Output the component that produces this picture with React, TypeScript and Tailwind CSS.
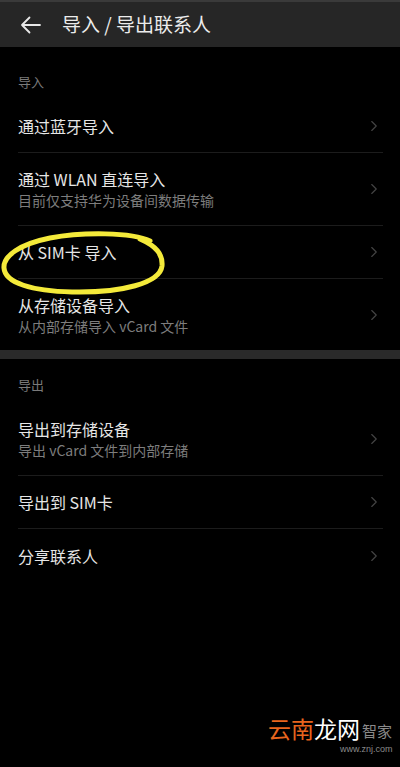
import { ChevronRight } from 'lucide-react';

type Item = { title: string; sub?: string };

const importItems: Item[] = [
  { title: '通过蓝牙导入' },
  { title: '通过 WLAN 直连导入', sub: '目前仅支持华为设备间数据传输' },
  { title: '从 SIM卡 导入' },
  { title: '从存储设备导入', sub: '从内部存储导入 vCard 文件' },
];

const exportItems: Item[] = [
  { title: '导出到存储设备', sub: '导出 vCard 文件到内部存储' },
  { title: '导出到 SIM卡' },
  { title: '分享联系人' },
];

function Row({ item, last }: { item: Item; last?: boolean }) {
  const h = item.sub ? (last ? 'h-[71px]' : 'h-[73px]') : 'h-[53px]';
  return (
    <div className={`ml-[18px] mr-[17px] flex items-center justify-between ${h} ${last ? '' : 'border-b border-[#1c1c1c]'}`}>
      <div className="flex flex-col">
        <span className="text-[16px] leading-[22px] text-[#e6e6e6]">{item.title}</span>
        {item.sub && <span className="text-[14px] leading-[20px] text-[#7d7d7d]">{item.sub}</span>}
      </div>
      <ChevronRight className="w-[18px] h-[18px] text-[#444444]" strokeWidth={1.5} />
    </div>
  );
}

export default function App() {
  return (
    <div className="relative w-[400px] h-[767px] overflow-hidden bg-black font-['Noto_Sans_CJK_SC','Noto_Sans',sans-serif]">
      {/* header */}
      <div className="h-[47px] bg-[#262626] border-t-2 border-[#3a3a3a] flex items-center">
        <svg className="ml-[20px] w-[21px] h-[18px]" viewBox="0 0 21 18" fill="none" stroke="#e8e8e8" strokeWidth="1.8" strokeLinecap="round" strokeLinejoin="round">
          <path d="M20 9H2M9.5 1.5L2 9l7.5 7.5" />
        </svg>
        <span className="ml-[21px] text-[19px] text-[#ececec]">导入 / 导出联系人</span>
      </div>

      {/* import */}
      <div className="pl-[18px] pt-[26px] pb-[9px] text-[13px] leading-[18px] text-[#7a7a7a]">导入</div>
      <Row item={importItems[0]} />
      <Row item={importItems[1]} />
      <Row item={importItems[2]} />
      <Row item={importItems[3]} last />

      <div className="h-[9px] bg-[#2a2a2a]" />

      {/* export */}
      <div className="pl-[18px] pt-[17px] pb-[9px] text-[13px] leading-[18px] text-[#7a7a7a]">导出</div>
      <Row item={exportItems[0]} />
      <Row item={exportItems[1]} />
      <Row item={exportItems[2]} last />

      {/* hand-drawn highlight */}
      <svg className="absolute left-0 top-[228px] w-[170px] h-[68px]" viewBox="0 0 170 68" fill="none" stroke="#f4ea3a" strokeWidth="5" strokeLinecap="round">
        <path d="M150 13C132 4 82 4 50 10C20 16 3 28 4 40C5 55 32 63 72 64C122 65 160 55 162 38C163 26 156 18 140 11" />
      </svg>

      {/* watermark */}
      <div className="absolute left-[268px] top-[714px] flex items-end">
        <span className="text-[23px] leading-[28px] text-[#e8651e]">云南</span>
        <span className="text-[23px] leading-[28px] text-white">龙网</span>
        <span className="ml-[2px] text-[15px] leading-[22px] text-[#8a8a8a]">智家</span>
      </div>
      <div className="absolute left-[340px] top-[743px] text-[9px] leading-[12px] text-[#8a8a8a] font-['Liberation_Sans',sans-serif]">www.znj.com</div>
    </div>
  );
}
